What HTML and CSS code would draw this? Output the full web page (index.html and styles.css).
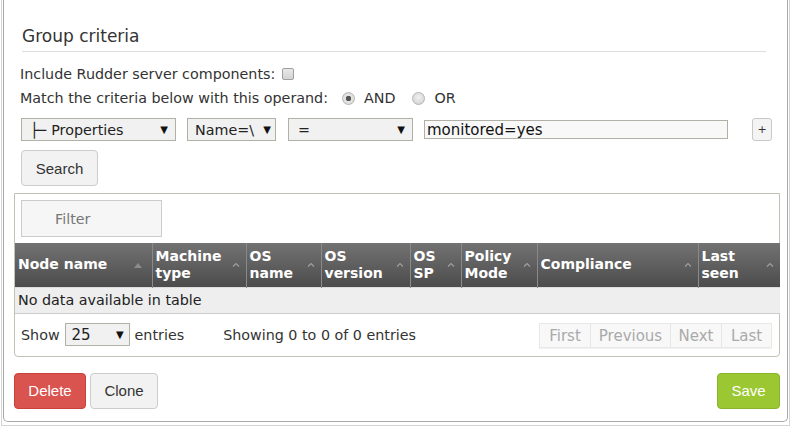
FILE: index.html
```html
<!DOCTYPE html>
<html lang="en">
<head>
  <meta charset="UTF-8">
  <title>Group criteria</title>
  <link rel="stylesheet" href="styles.css">
</head>
<body>
  <div class="outer">
    <div class="panel">
      <div class="criteria">
        <h3>Group criteria</h3>
        <div class="line">
          <span>Include Rudder server components:</span>
          <input type="checkbox" class="check">
        </div>
        <div class="line">
          <span>Match the criteria below with this operand:</span>
          <label class="opt"><input type="radio" name="op" class="radio" checked><span>AND</span></label>
          <label class="opt"><input type="radio" name="op" class="radio"><span>OR</span></label>
        </div>
        <div class="crit-row">
          <span class="select sel-object"><span><span class="tree">&#9500;&#9472;</span>Properties</span><span class="arrow">&#9660;</span></span>
          <span class="select sel-attr"><span>Name=\</span><span class="arrow">&#9660;</span></span>
          <span class="select sel-comp"><span>=</span><span class="arrow">&#9660;</span></span>
          <input type="text" class="crit-value" value="monitored=yes">
          <button class="btn-add">+</button>
        </div>
        <button class="btn btn-search">Search</button>
      </div>

      <div class="results">
        <div class="filter-bar">
          <input type="text" class="filter" placeholder="Filter">
        </div>
        <table class="grid">
          <thead>
            <tr>
              <th class="c-node"><span>Node name</span><svg class="sort" width="8" height="5" viewBox="0 0 8 5"><path d="M0 5 L4 0 L8 5 Z" fill="#8c8c8c"/></svg></th>
              <th class="c-machine"><span>Machine type</span><svg class="sort" width="8" height="5" viewBox="0 0 8 5"><path d="M1 4.5 L4 1.5 L7 4.5" fill="none" stroke="#a0a0a0" stroke-width="1.2"/></svg></th>
              <th class="c-osname"><span>OS name</span><svg class="sort" width="8" height="5" viewBox="0 0 8 5"><path d="M1 4.5 L4 1.5 L7 4.5" fill="none" stroke="#a0a0a0" stroke-width="1.2"/></svg></th>
              <th class="c-osver"><span>OS version</span><svg class="sort" width="8" height="5" viewBox="0 0 8 5"><path d="M1 4.5 L4 1.5 L7 4.5" fill="none" stroke="#a0a0a0" stroke-width="1.2"/></svg></th>
              <th class="c-ossp"><span>OS SP</span><svg class="sort" width="8" height="5" viewBox="0 0 8 5"><path d="M1 4.5 L4 1.5 L7 4.5" fill="none" stroke="#a0a0a0" stroke-width="1.2"/></svg></th>
              <th class="c-mode"><span>Policy Mode</span><svg class="sort" width="8" height="5" viewBox="0 0 8 5"><path d="M1 4.5 L4 1.5 L7 4.5" fill="none" stroke="#a0a0a0" stroke-width="1.2"/></svg></th>
              <th class="c-compl"><span>Compliance</span><svg class="sort" width="8" height="5" viewBox="0 0 8 5"><path d="M1 4.5 L4 1.5 L7 4.5" fill="none" stroke="#a0a0a0" stroke-width="1.2"/></svg></th>
              <th class="c-seen"><span>Last seen</span><svg class="sort" width="8" height="5" viewBox="0 0 8 5"><path d="M1 4.5 L4 1.5 L7 4.5" fill="none" stroke="#a0a0a0" stroke-width="1.2"/></svg></th>
            </tr>
          </thead>
          <tbody>
            <tr>
              <td colspan="8" class="empty">No data available in table</td>
            </tr>
          </tbody>
        </table>
        <div class="table-foot">
          <div class="length">
            <span>Show</span>
            <span class="select sel-length"><span>25</span><span class="arrow">&#9660;</span></span>
            <span>entries</span>
          </div>
          <div class="info">Showing 0 to 0 of 0 entries</div>
          <div class="pager">
            <span class="page p-first">First</span>
            <span class="page p-prev">Previous</span>
            <span class="page p-next">Next</span>
            <span class="page p-last">Last</span>
          </div>
        </div>
      </div>

      <div class="actions">
        <button class="btn btn-delete">Delete</button>
        <button class="btn btn-clone">Clone</button>
        <button class="btn btn-save">Save</button>
      </div>
    </div>
  </div>
</body>
</html>
```

FILE: styles.css
```css
body {
  margin: 0;
  font-family: "DejaVu Sans", Verdana, sans-serif;
  color: #333;
  background-color: white;
}

.outer {
  width: 789px;
  height: 426px;
  margin-left: 1px;
  border: 1px solid #d4d4d4;
  border-top: none;
  box-sizing: border-box;
}

.panel {
  height: 422px;
  margin: 0 1px 0 1px;
  border: 1px solid #a8a8a8;
  border-top: none;
  border-radius: 0 0 5px 5px;
  padding: 24px 7px 0 10px;
  box-sizing: border-box;
}

/* criteria form */

.criteria {
  padding-left: 6px;
}

h3 {
  margin: 0 14px 10px 2px;
  padding-bottom: 3px;
  font-size: 17px;
  font-weight: normal;
  line-height: 24px;
  color: #333;
  border-bottom: 1px solid #ddd;
}

.line {
  display: flex;
  align-items: center;
  height: 24px;
  font-size: 14.3px;
  white-space: nowrap;
}

.check {
  appearance: none;
  width: 12px;
  height: 12px;
  margin: 0 0 0 7px;
  border: 1px solid #a0a0a0;
  border-radius: 2px;
  background: linear-gradient(#e8e8e8, #d4d4d4);
  box-sizing: border-box;
}

.opt {
  display: flex;
  align-items: center;
  margin-left: 14px;
}

.opt + .opt {
  margin-left: 17px;
}

.radio {
  appearance: none;
  width: 13px;
  height: 13px;
  margin: 0 9px 0 0;
  border: 1px solid #b4b4b4;
  border-radius: 50%;
  background: radial-gradient(circle at 50% 40%, #f0f0f0, #d0d0d0);
  box-sizing: border-box;
}

.radio:checked {
  background: radial-gradient(circle, #555 0, #555 2.5px, #e4e4e4 3px, #d8d8d8 100%);
}

.crit-row {
  display: flex;
  align-items: center;
  height: 25px;
  margin-top: 7px;
  padding-left: 1px;
}

.select {
  display: flex;
  justify-content: space-between;
  align-items: center;
  height: 23px;
  padding: 0 7px 0 9px;
  border: 1px solid #b1b0a4;
  background-color: #f1f1f1;
  font-size: 14.3px;
  color: #222;
  box-sizing: border-box;
  white-space: nowrap;
}

.select .arrow {
  font-size: 10px;
  color: #111;
}

.tree {
  margin-right: 6px;
  letter-spacing: -1px;
}

.sel-object {
  width: 155px;
  margin-right: 11px;
  padding-left: 8px;
}

.sel-attr {
  width: 89px;
  margin-right: 12px;
  padding-left: 7px;
  padding-right: 4px;
}

.sel-comp {
  width: 125px;
  margin-right: 11px;
}

.crit-value {
  width: 304px;
  height: 19px;
  padding: 0 2px;
  border: 1px solid #b1b0a4;
  background-color: #f8f8f8;
  font-family: "DejaVu Sans", Verdana, sans-serif;
  font-size: 15px;
  color: #111;
  box-sizing: border-box;
}

.btn-add {
  width: 20px;
  height: 23px;
  margin-left: 24px;
  padding: 0;
  border: 1px solid #c8c8c8;
  border-radius: 3px;
  background-color: #f4f4f4;
  font-family: "DejaVu Sans", sans-serif;
  font-size: 11px;
  color: #333;
}

.btn {
  height: 36px;
  padding: 0 13px;
  border: 1px solid #ccc;
  border-radius: 4px;
  background-color: #f2f2f2;
  font-family: "Liberation Sans", Arial, sans-serif;
  font-size: 15px;
  color: #333;
  cursor: pointer;
}

.btn-search {
  width: 77px;
  margin: 8px 0 0 1px;
}

/* results table */

.results {
  margin-top: 7px;
  border: 1px solid #c2c1b6;
  border-radius: 0 0 4px 4px;
}

.filter-bar {
  padding: 6px;
}

.filter {
  width: 141px;
  height: 37px;
  padding: 0 0 0 33px;
  border: 1px solid #ccc;
  background-color: #f6f6f6;
  font-family: "DejaVu Sans", Verdana, sans-serif;
  font-size: 14.3px;
  box-sizing: border-box;
}

.filter::placeholder {
  color: #777;
}

.grid {
  width: 100%;
  border-collapse: collapse;
  table-layout: fixed;
}

.grid th {
  position: relative;
  height: 44px;
  padding: 0 3px;
  border-left: 1px solid #8a8a8a;
  background: linear-gradient(#727272, #4c4c4c);
  color: white;
  font-size: 14px;
  font-weight: bold;
  line-height: 17px;
  text-align: left;
  box-sizing: border-box;
}

.grid th:first-child {
  border-left: none;
}

.grid th .sort {
  position: absolute;
  right: 6px;
  top: 19px;
}

.grid th:first-child .sort {
  right: 10px;
  top: 20px;
}

.c-node { width: 137px; }
.c-machine { width: 94px; }
.c-osname { width: 75px; }
.c-osver { width: 89px; }
.c-ossp { width: 51px; }
.c-mode { width: 76px; }
.c-compl { width: 161px; }
.c-seen { width: 82px; }

.grid td.empty {
  height: 25px;
  padding: 0 3px;
  border-top: 1px solid #ddd;
  border-bottom: 1px solid #ccc;
  background-color: #eee;
  font-size: 14.3px;
  color: #222;
}

.table-foot {
  display: flex;
  align-items: center;
  height: 42px;
  padding: 0 7px 0 6px;
  font-size: 14.3px;
}

.length {
  display: flex;
  align-items: center;
  white-space: nowrap;
}

.sel-length {
  width: 65px;
  height: 23px;
  margin: 0 5px;
  padding: 0 5px 0 6px;
  font-size: 15px;
}

.info {
  margin-left: 39px;
}

.pager {
  display: flex;
  margin-left: auto;
  margin-top: 2px;
  border: 1px solid #e8e8e8;
  box-shadow: 0 1px 1px rgba(0, 0, 0, 0.05);
}

.page {
  padding: 3px 0 2px 0;
  background-color: #f8f8f8;
  color: #aaa;
  font-size: 15px;
  text-align: center;
  border-left: 1px solid #e6e6e6;
}

.page:first-child {
  border-left: none;
}

.p-first { width: 50px; }
.p-prev { width: 79px; }
.p-next { width: 50px; }
.p-last { width: 49px; }

/* bottom buttons */

.actions {
  display: flex;
  margin-top: 16px;
}

.btn-delete {
  width: 72px;
  border-color: #c9403c;
  background-color: #d9534f;
  color: white;
}

.btn-clone {
  width: 68px;
  margin-left: 4px;
}

.btn-save {
  width: 63px;
  margin-left: auto;
  border-color: #8ab52a;
  background-color: #9bc832;
  color: white;
}
```
